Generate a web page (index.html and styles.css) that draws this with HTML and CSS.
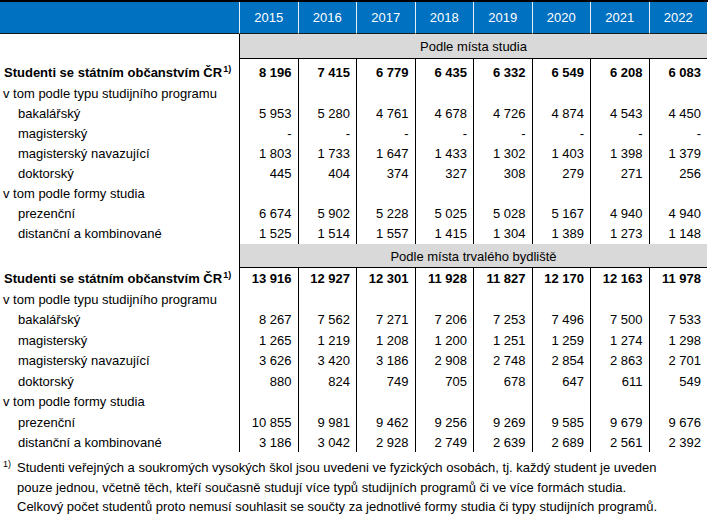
FILE: index.html
```html
<!DOCTYPE html>
<html lang="cs">
<head>
<meta charset="utf-8">
<title>Studenti se státním občanstvím ČR</title>
<link rel="stylesheet" href="styles.css">
</head>
<body>
<div class="sheet">
<table class="t">
<colgroup><col class="lab"><col class="num"><col class="num"><col class="num"><col class="num"><col class="num"><col class="num"><col class="num"><col class="num"></colgroup>
<thead>
<tr class="hd"><th class="hl"></th><th>2015</th><th>2016</th><th>2017</th><th>2018</th><th>2019</th><th>2020</th><th>2021</th><th>2022</th></tr>
</thead>
<tbody class="s1">
<tr class="sec"><td></td><td colspan="8" class="bar">Podle místa studia</td></tr>
<tr class="tot top"><td class="lb">Studenti se státním občanstvím ČR<sup>1)</sup></td><td class="n">8 196</td><td class="n">7 415</td><td class="n">6 779</td><td class="n">6 435</td><td class="n">6 332</td><td class="n">6 549</td><td class="n">6 208</td><td class="n">6 083</td></tr>
<tr><td class="l">v tom podle typu studijního programu</td><td class="n"></td><td class="n"></td><td class="n"></td><td class="n"></td><td class="n"></td><td class="n"></td><td class="n"></td><td class="n"></td></tr>
<tr><td class="i">bakalářský</td><td class="n">5 953</td><td class="n">5 280</td><td class="n">4 761</td><td class="n">4 678</td><td class="n">4 726</td><td class="n">4 874</td><td class="n">4 543</td><td class="n">4 450</td></tr>
<tr><td class="i">magisterský</td><td class="n">-</td><td class="n">-</td><td class="n">-</td><td class="n">-</td><td class="n">-</td><td class="n">-</td><td class="n">-</td><td class="n">-</td></tr>
<tr><td class="i">magisterský navazující</td><td class="n">1 803</td><td class="n">1 733</td><td class="n">1 647</td><td class="n">1 433</td><td class="n">1 302</td><td class="n">1 403</td><td class="n">1 398</td><td class="n">1 379</td></tr>
<tr><td class="i">doktorský</td><td class="n">445</td><td class="n">404</td><td class="n">374</td><td class="n">327</td><td class="n">308</td><td class="n">279</td><td class="n">271</td><td class="n">256</td></tr>
<tr><td class="l">v tom podle formy studia</td><td class="n"></td><td class="n"></td><td class="n"></td><td class="n"></td><td class="n"></td><td class="n"></td><td class="n"></td><td class="n"></td></tr>
<tr><td class="i">prezenční</td><td class="n">6 674</td><td class="n">5 902</td><td class="n">5 228</td><td class="n">5 025</td><td class="n">5 028</td><td class="n">5 167</td><td class="n">4 940</td><td class="n">4 940</td></tr>
<tr class="last"><td class="i">distanční a kombinované</td><td class="n">1 525</td><td class="n">1 514</td><td class="n">1 557</td><td class="n">1 415</td><td class="n">1 304</td><td class="n">1 389</td><td class="n">1 273</td><td class="n">1 148</td></tr>
</tbody>
<tbody class="s2">
<tr class="sec"><td></td><td colspan="8" class="bar">Podle místa trvalého bydliště</td></tr>
<tr class="tot"><td class="lb">Studenti se státním občanstvím ČR<sup>1)</sup></td><td class="n">13 916</td><td class="n">12 927</td><td class="n">12 301</td><td class="n">11 928</td><td class="n">11 827</td><td class="n">12 170</td><td class="n">12 163</td><td class="n">11 978</td></tr>
<tr class="odd"><td class="l">v tom podle typu studijního programu</td><td class="n"></td><td class="n"></td><td class="n"></td><td class="n"></td><td class="n"></td><td class="n"></td><td class="n"></td><td class="n"></td></tr>
<tr><td class="i">bakalářský</td><td class="n">8 267</td><td class="n">7 562</td><td class="n">7 271</td><td class="n">7 206</td><td class="n">7 253</td><td class="n">7 496</td><td class="n">7 500</td><td class="n">7 533</td></tr>
<tr class="odd"><td class="i">magisterský</td><td class="n">1 265</td><td class="n">1 219</td><td class="n">1 208</td><td class="n">1 200</td><td class="n">1 251</td><td class="n">1 259</td><td class="n">1 274</td><td class="n">1 298</td></tr>
<tr><td class="i">magisterský navazující</td><td class="n">3 626</td><td class="n">3 420</td><td class="n">3 186</td><td class="n">2 908</td><td class="n">2 748</td><td class="n">2 854</td><td class="n">2 863</td><td class="n">2 701</td></tr>
<tr class="odd"><td class="i">doktorský</td><td class="n">880</td><td class="n">824</td><td class="n">749</td><td class="n">705</td><td class="n">678</td><td class="n">647</td><td class="n">611</td><td class="n">549</td></tr>
<tr><td class="l">v tom podle formy studia</td><td class="n"></td><td class="n"></td><td class="n"></td><td class="n"></td><td class="n"></td><td class="n"></td><td class="n"></td><td class="n"></td></tr>
<tr class="odd"><td class="i">prezenční</td><td class="n">10 855</td><td class="n">9 981</td><td class="n">9 462</td><td class="n">9 256</td><td class="n">9 269</td><td class="n">9 585</td><td class="n">9 679</td><td class="n">9 676</td></tr>
<tr><td class="i">distanční a kombinované</td><td class="n">3 186</td><td class="n">3 042</td><td class="n">2 928</td><td class="n">2 749</td><td class="n">2 639</td><td class="n">2 689</td><td class="n">2 561</td><td class="n">2 392</td></tr>
</tbody>
</table>
</div>
<p class="fn"><span class="fnmark">1)</span>Studenti veřejných a soukromých vysokých škol jsou uvedeni ve fyzických osobách, tj. každý student je uveden<br>pouze jednou, včetně těch, kteří současně studují více typů studijních programů či ve více formách studia.<br>Celkový počet studentů proto nemusí souhlasit se součty za jednotlivé formy studia či typy studijních programů.</p>
</body>
</html>
```

FILE: styles.css
```css
html, body {
  margin: 0;
  padding: 0;
  background: #fff;
}
body {
  font-family: "Liberation Sans", Arial, sans-serif;
  font-size: 13px;
  color: #000;
}
.sheet {
  width: 708px;
  border-top: 2px solid #000;
}
.t {
  width: 707px;
  table-layout: fixed;
  border-collapse: separate;
  border-spacing: 0;
}
.t col.lab { width: 239px; }
.t col.num { width: 58.5px; }
.t th, .t td {
  box-sizing: border-box;
  padding: 0;
  white-space: nowrap;
  vertical-align: middle;
}
.hd th {
  height: 32px;
  background: #0070c0;
  color: #fff;
  font-weight: normal;
  text-align: center;
  border-left: 1px solid #e6eef8;
  border-bottom: 1px solid #1a1a1a;
}
.hd th.hl {
  border-left: none;
}
.sec td.bar {
  background: #d9d9d9;
  text-align: center;
  border-left: 1px solid #000;
  border-bottom: 1px solid #000;
  padding-top: 1px;
}
.s1 tr { height: 20px; }
.s1 tr.sec { height: 25px; }
.s1 tr.sec td { height: 25px; }
.s1 tr.top { height: 24px; }
.s1 tr.top td { padding-top: 2px; }
.s1 tr.last { height: 21px; }
.s1 tr.last td { padding-bottom: 1px; }
.s2 tr { height: 20px; }
.s2 tr.sec { height: 24px; }
.s2 tr.sec td { height: 24px; }
.s2 tr.odd { height: 21px; }
.s2 tr.odd td { padding-top: 1px; }
td.n {
  text-align: right;
  padding-right: 6px;
  border-left: 1px solid #000;
}
.tot td.n { font-weight: bold; }
td.lb {
  font-weight: bold;
  padding-left: 4px;
}
td.lb sup {
  font-size: 9px;
  line-height: 0;
  vertical-align: 5px;
  margin-left: 1px;
}
td.l { padding-left: 3px; }
td.i { padding-left: 18px; }
.fn {
  margin: 6px 0 0 0;
  padding-left: 17px;
  line-height: 19.5px;
}
.fnmark {
  display: inline-block;
  width: 14px;
  margin-left: -14px;
  font-size: 9px;
  line-height: 0;
  vertical-align: 5px;
}
```
